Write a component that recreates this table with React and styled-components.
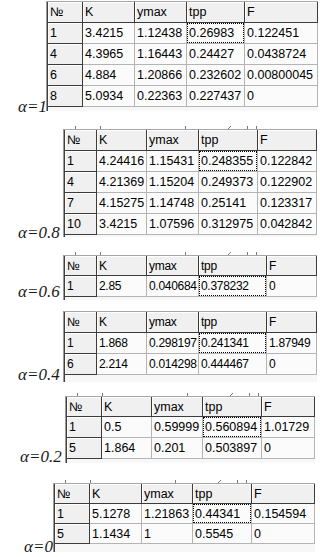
import React from 'react';
import styled, { createGlobalStyle } from 'styled-components';

const GlobalStyle = createGlobalStyle`
  body {
    margin: 0;
    background: #fff;
    font-family: "Liberation Sans", Arial, sans-serif;
  }
`;

// one entry per alpha value, columns/positions read off the old screenshot
const tables = [
  {
    alpha: '1', left: 46, labelX: 18, labelMb: -4, top: 0, strip: 1, ticks: false,
    cols: [35, 52, 52, 58, 73], head: 21, row: 21, extra: 4, fs: 12.5, ls: 0,
    rows: [
      ['1', '3.4215', '1.12438', '0.26983', '0.122451'],
      ['4', '4.3965', '1.16443', '0.24427', '0.0438724'],
      ['6', '4.884', '1.20866', '0.232602', '0.00800045'],
      ['8', '5.0934', '0.22363', '0.227437', '0'],
    ],
  },
  {
    alpha: '0.8', left: 63, labelX: 18, labelMb: -4, top: 15, strip: 3, ticks: true,
    cols: [32, 50, 52, 59, 59], head: 21, row: 21, extra: 2, fs: 12.5, ls: 0,
    rows: [
      ['1', '4.24416', '1.15431', '0.248355', '0.122842'],
      ['4', '4.21369', '1.15204', '0.249373', '0.122902'],
      ['7', '4.15275', '1.14748', '0.25141', '0.123317'],
      ['10', '3.4215', '1.07596', '0.312975', '0.042842'],
    ],
  },
  {
    alpha: '0.6', left: 63, labelX: 18, labelMb: 0, top: 15, strip: 3, ticks: true,
    cols: [32, 50, 52, 68, 50], head: 20, row: 21, extra: 3, fs: 12, ls: -0.3,
    rows: [['1', '2.85', '0.040684', '0.378232', '0']],
  },
  {
    alpha: '0.4', left: 63, labelX: 18, labelMb: -1, top: 11, strip: 0, ticks: false,
    cols: [32, 50, 52, 68, 50], head: 21, row: 21, extra: 7, fs: 12, ls: -0.3,
    rows: [
      ['1', '1.868', '0.298197', '0.241341', '1.87949'],
      ['6', '2.214', '0.014298', '0.444467', '0'],
    ],
  },
  {
    alpha: '0.2', left: 65, labelX: 20, labelMb: -2, top: 11, strip: 3, ticks: true,
    cols: [35, 50, 51, 59, 53], head: 20, row: 21, extra: 4, fs: 12.5, ls: 0,
    rows: [
      ['1', '0.5', '0.59999', '0.560894', '1.01729'],
      ['5', '1.864', '0.201', '0.503897', '0'],
    ],
  },
  {
    alpha: '0', left: 53, labelX: 24, labelMb: -3, top: 17, strip: 3, ticks: true,
    cols: [35, 52, 51, 59, 63], head: 20, row: 20, extra: 8, fs: 12.5, ls: 0,
    rows: [
      ['1', '5.1278', '1.21863', '0.44341', '0.154594'],
      ['5', '1.1434', '1', '0.5545', '0'],
    ],
  },
];

const header = ['№', 'K', 'ymax', 'tpp', 'F'];
const FOCUS_COL = 3;

function TickStrip({ width, height, ticks }) {
  return (
    <Strip width={width} height={height} viewBox={`0 0 ${width} ${height}`}>
      {ticks && (
        <g stroke="#7a7a7a" strokeWidth="1">
          {[12, 37, 122, 184, 193].map((x) => (
            <line key={x} x1={x + 0.5} y1="0" x2={x + 0.5} y2={height} />
          ))}
          <line x1="165" y1={height} x2="168" y2="0" />
        </g>
      )}
    </Strip>
  );
}

function Grid({ t }) {
  const width = t.cols.reduce((a, b) => a + b, 0) + 2;
  return (
    <Frame>
      <TickStrip width={width} height={t.strip} ticks={t.ticks} />
      <Outer>
        <Table
          $cols={t.cols.map((c) => c + 'px').join(' ')}
          $rows={`${t.head}px repeat(${t.rows.length}, ${t.row}px)`}
          $extra={t.extra}
          $fs={t.fs}
          $ls={t.ls}
        >
          {header.map((h) => (
            <Cell key={h} $fixed>{h}</Cell>
          ))}
          {t.rows.map((r, i) =>
            r.map((v, j) => (
              <Cell key={i + '-' + j} $fixed={j === 0} $focus={i === 0 && j === FOCUS_COL}>
                {v}
              </Cell>
            ))
          )}
        </Table>
      </Outer>
    </Frame>
  );
}

export default function App() {
  return (
    <>
      <GlobalStyle />
      <Page>
        {tables.map((t) => (
          <Block key={t.alpha} $top={t.top}>
            <Label $w={t.left} $pl={t.labelX} $mb={t.labelMb}>
              α={t.alpha}
            </Label>
            <Grid t={t} />
          </Block>
        ))}
      </Page>
    </>
  );
}

const Page = styled.div`
  width: 320px;
  display: flex;
  flex-direction: column;
  padding-bottom: 5px;
  overflow-x: hidden;
`;

const Block = styled.section`
  display: flex;
  align-items: flex-end;
  margin-top: ${(p) => p.$top}px;
`;

const Label = styled.div`
  flex-shrink: 0;
  box-sizing: border-box;
  width: ${(p) => p.$w}px;
  padding-left: ${(p) => p.$pl}px;
  margin-bottom: ${(p) => p.$mb}px;
  font: italic 17px/17px "Liberation Serif", "Times New Roman", serif;
  color: #1a1a1a;
  white-space: nowrap;
`;

const Frame = styled.div`
  display: flex;
  flex-direction: column;
`;

const Strip = styled.svg`
  display: block;
`;

const Outer = styled.div`
  border-left: 1px solid #9a9a9a;
  border-top: 1px solid #a6a6a6;
`;

const Table = styled.div`
  display: grid;
  grid-template-columns: ${(p) => p.$cols};
  grid-template-rows: ${(p) => p.$rows};
  padding-bottom: ${(p) => p.$extra}px;
  border-left: 1px solid #404040;
  background: #f7f7f7;
  font-size: ${(p) => p.$fs}px;
  letter-spacing: ${(p) => p.$ls}px;
`;

const Cell = styled.div`
  position: relative;
  box-sizing: border-box;
  display: flex;
  align-items: center;
  padding-left: 2px;
  color: #000;
  white-space: nowrap;
  overflow: hidden;
  background: ${(p) => (p.$fixed ? '#f0f0f0' : '#fbfbfb')};
  border-right: 1px solid ${(p) => (p.$fixed ? '#3c3c3c' : '#b4b4b4')};
  border-bottom: 1px solid ${(p) => (p.$fixed ? '#3c3c3c' : '#b4b4b4')};
  box-shadow: ${(p) => (p.$fixed ? 'inset 1px 1px 0 #ffffff' : 'none')};

  &::after {
    content: '';
    display: ${(p) => (p.$focus ? 'block' : 'none')};
    position: absolute;
    inset: 0;
    border: 1px dotted #000;
  }
`;
